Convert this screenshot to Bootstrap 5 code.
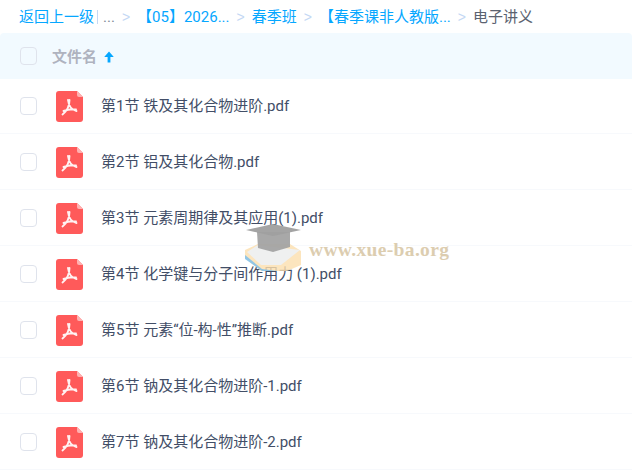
<!DOCTYPE html>
<html lang="zh"><head><meta charset="utf-8">
<link href="https://cdn.jsdelivr.net/npm/bootstrap@5.3.0/dist/css/bootstrap.min.css" rel="stylesheet">
<style>
html,body{height:473px;overflow:hidden;background:#fff}
body{font-family:Roboto,"Noto Sans CJK SC",sans-serif;font-size:15px;color:#424e67;position:relative}
.crumbs{height:33px;padding-left:19px;white-space:nowrap;color:#06a7ff}
.crumbs>span{padding-top:2px}
.crumbs .bar{width:1px;height:14px;background:#c4d8f4;margin:0 5px 0 3px;padding:0}
.crumbs .more{color:#818999}
.crumbs .sep{color:#c4d8f4;font-family:"Liberation Sans",sans-serif;font-size:14px;margin:0 7px}
.crumbs .cur{color:#5b6270}
.headrow{height:46px;background:#f2faff;border-radius:4px 4px 0 0;padding-left:20px;position:relative}
.headrow .lbl{color:#afb3bf;font-weight:700;margin-left:15px;padding-top:2px}
.headrow svg{margin-left:7px;margin-top:1px}
.tick{width:17px;height:18px;border:1.5px solid #dfe3ec;border-radius:4px;background:#fff;flex:none}
.headrow .tick{background:transparent}
#rows{margin-top:-1px}
.filerow{height:56px;padding-left:20px;border-bottom:1px solid #f7f9fc}
.filerow>span:last-child{padding-top:2px}
.pdfic{margin-left:19px;margin-right:18px;margin-top:2px;flex:none}
.wm{position:absolute;left:245px;top:224px;pointer-events:none}
.wmtxt{position:absolute;left:64px;top:11px;font-family:"Liberation Serif",serif;font-weight:700;font-size:19.5px;color:#dccdb0;white-space:nowrap;letter-spacing:.35px}
</style></head><body>
<div class="crumbs d-flex align-items-center">
<span>返回上一级</span><span class="bar"></span><span class="more">...</span><span class="sep">&gt;</span>
<span>【05】2026...</span><span class="sep">&gt;</span><span>春季班</span><span class="sep">&gt;</span><span>【春季课非人教版...</span><span class="sep">&gt;</span><span class="cur">电子讲义</span>
</div>
<div class="headrow d-flex align-items-center">
<span class="tick"></span><span class="lbl">文件名</span>
<svg width="10" height="12" viewBox="0 0 10 12"><path d="M5 .5 9.800 6H6.400v5.500H3.600V6H.2z" fill="#06a7ff"/></svg>
</div>
<div id="rows">
<div class="filerow d-flex align-items-center"><span class="tick"></span><svg class="pdfic" width="27" height="31" viewBox="0 0 27 31"><path d="M3 0H21L27 6V28a3 3 0 0 1-3 3H3a3 3 0 0 1-3-3V3a3 3 0 0 1 3-3z" fill="#ff5a5a"/><path d="M21 0 27 6H23a2 2 0 0 1-2-2z" fill="#ffb1b1"/><path d="M12 9C12.500 13.500 14.500 18.500 20.500 20M13.500 9C13.500 14 11.500 19.500 6.500 23.500M7.500 20C11.500 18.500 15.500 18 20 18.500" fill="none" stroke="#fff" stroke-width="1.9" stroke-linecap="round" opacity=".92"/></svg><span>第1节 铁及其化合物进阶.pdf</span></div>
<div class="filerow d-flex align-items-center"><span class="tick"></span><svg class="pdfic" width="27" height="31" viewBox="0 0 27 31"><path d="M3 0H21L27 6V28a3 3 0 0 1-3 3H3a3 3 0 0 1-3-3V3a3 3 0 0 1 3-3z" fill="#ff5a5a"/><path d="M21 0 27 6H23a2 2 0 0 1-2-2z" fill="#ffb1b1"/><path d="M12 9C12.500 13.500 14.500 18.500 20.500 20M13.500 9C13.500 14 11.500 19.500 6.500 23.500M7.500 20C11.500 18.500 15.500 18 20 18.500" fill="none" stroke="#fff" stroke-width="1.9" stroke-linecap="round" opacity=".92"/></svg><span>第2节 铝及其化合物.pdf</span></div>
<div class="filerow d-flex align-items-center"><span class="tick"></span><svg class="pdfic" width="27" height="31" viewBox="0 0 27 31"><path d="M3 0H21L27 6V28a3 3 0 0 1-3 3H3a3 3 0 0 1-3-3V3a3 3 0 0 1 3-3z" fill="#ff5a5a"/><path d="M21 0 27 6H23a2 2 0 0 1-2-2z" fill="#ffb1b1"/><path d="M12 9C12.500 13.500 14.500 18.500 20.500 20M13.500 9C13.500 14 11.500 19.500 6.500 23.500M7.500 20C11.500 18.500 15.500 18 20 18.500" fill="none" stroke="#fff" stroke-width="1.9" stroke-linecap="round" opacity=".92"/></svg><span>第3节 元素周期律及其应用(1).pdf</span></div>
<div class="filerow d-flex align-items-center"><span class="tick"></span><svg class="pdfic" width="27" height="31" viewBox="0 0 27 31"><path d="M3 0H21L27 6V28a3 3 0 0 1-3 3H3a3 3 0 0 1-3-3V3a3 3 0 0 1 3-3z" fill="#ff5a5a"/><path d="M21 0 27 6H23a2 2 0 0 1-2-2z" fill="#ffb1b1"/><path d="M12 9C12.500 13.500 14.500 18.500 20.500 20M13.500 9C13.500 14 11.500 19.500 6.500 23.500M7.500 20C11.500 18.500 15.500 18 20 18.500" fill="none" stroke="#fff" stroke-width="1.9" stroke-linecap="round" opacity=".92"/></svg><span>第4节 化学键与分子间作用力 (1).pdf</span></div>
<div class="filerow d-flex align-items-center"><span class="tick"></span><svg class="pdfic" width="27" height="31" viewBox="0 0 27 31"><path d="M3 0H21L27 6V28a3 3 0 0 1-3 3H3a3 3 0 0 1-3-3V3a3 3 0 0 1 3-3z" fill="#ff5a5a"/><path d="M21 0 27 6H23a2 2 0 0 1-2-2z" fill="#ffb1b1"/><path d="M12 9C12.500 13.500 14.500 18.500 20.500 20M13.500 9C13.500 14 11.500 19.500 6.500 23.500M7.500 20C11.500 18.500 15.500 18 20 18.500" fill="none" stroke="#fff" stroke-width="1.9" stroke-linecap="round" opacity=".92"/></svg><span>第5节 元素“位-构-性”推断.pdf</span></div>
<div class="filerow d-flex align-items-center"><span class="tick"></span><svg class="pdfic" width="27" height="31" viewBox="0 0 27 31"><path d="M3 0H21L27 6V28a3 3 0 0 1-3 3H3a3 3 0 0 1-3-3V3a3 3 0 0 1 3-3z" fill="#ff5a5a"/><path d="M21 0 27 6H23a2 2 0 0 1-2-2z" fill="#ffb1b1"/><path d="M12 9C12.500 13.500 14.500 18.500 20.500 20M13.500 9C13.500 14 11.500 19.500 6.500 23.500M7.500 20C11.500 18.500 15.500 18 20 18.500" fill="none" stroke="#fff" stroke-width="1.9" stroke-linecap="round" opacity=".92"/></svg><span>第6节 钠及其化合物进阶-1.pdf</span></div>
<div class="filerow d-flex align-items-center"><span class="tick"></span><svg class="pdfic" width="27" height="31" viewBox="0 0 27 31"><path d="M3 0H21L27 6V28a3 3 0 0 1-3 3H3a3 3 0 0 1-3-3V3a3 3 0 0 1 3-3z" fill="#ff5a5a"/><path d="M21 0 27 6H23a2 2 0 0 1-2-2z" fill="#ffb1b1"/><path d="M12 9C12.500 13.500 14.500 18.500 20.500 20M13.500 9C13.500 14 11.500 19.500 6.500 23.500M7.500 20C11.500 18.500 15.500 18 20 18.500" fill="none" stroke="#fff" stroke-width="1.9" stroke-linecap="round" opacity=".92"/></svg><span>第7节 钠及其化合物进阶-2.pdf</span></div>
</div>
<div class="wm">
<svg width="58" height="50" viewBox="0 0 58 50"><path d="M0 26 13 20H45L56 27V41L42 47H16L0 34z" fill="#fbdfae" opacity=".8"/><path d="M0 31 17 45 32 47 17 47 0 35z" fill="#7fc0ea" opacity=".85"/><path d="M2 28 13 21 55 26 36 41 16 41z" fill="#eef0f2" opacity=".95"/><path d="M12 8 13 24 28 28 45 23V8z" fill="#a3a3a3" opacity=".95"/><path d="M1 6 28 0 56 6 28 12z" fill="#9f9f9f" opacity=".95"/></svg>
<span class="wmtxt">www.xue-ba.org</span>
</div>
</body></html>
